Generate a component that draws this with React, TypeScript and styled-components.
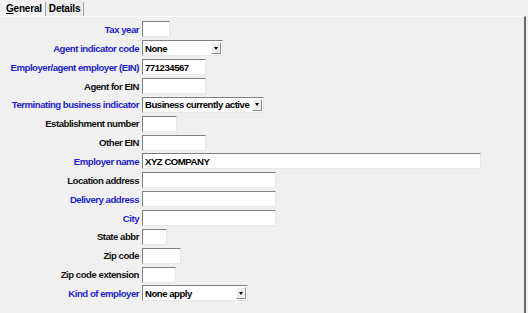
import styled, { createGlobalStyle } from 'styled-components';

const GlobalStyle = createGlobalStyle`
  html, body {
    margin: 0;
    padding: 0;
    background: #f0f0f0;
  }
`;

const Window = styled.div`
  width: 528px;
  height: 313px;
  display: flex;
  flex-direction: column;
  background: #f0f0f0;
  font-family: 'Liberation Sans', Arial, sans-serif;
  font-size: 9.6px;
  letter-spacing: -0.48px;
  font-weight: bold;
  overflow: hidden;
`;

const TabStrip = styled.div`
  display: flex;
  align-items: flex-end;
  height: 16px;
  padding-left: 3px;
`;

const Tab = styled.div<{ $active?: boolean }>`
  padding: 0 3px 0 3px;
  height: 14px;
  line-height: 14px;
  font-size: 10px;
  letter-spacing: -0.2px;
  color: #000;
  border-right: 1px solid #a0a0a0;
  background: ${(p) => (p.$active ? '#f4f4f4' : '#ececec')};

  u {
    text-decoration: underline;
  }
`;

const Panel = styled.div`
  flex: 1;
  border-top: 1px solid #fafafa;
  border-right: 2px solid #6a6a6a;
  margin-right: 2px;
  padding-top: 3px;
`;

const Form = styled.div`
  display: grid;
  grid-template-columns: 139px 1fr;
  grid-auto-rows: 18.86px;
  column-gap: 3px;
  align-items: center;
`;

const Label = styled.div<{ $blue?: boolean }>`
  text-align: right;
  white-space: nowrap;
  color: ${(p) => (p.$blue ? '#1e1ecc' : '#111')};
`;

const Field = styled.div<{ $w: number }>`
  width: ${(p) => p.$w}px;
  height: 16px;
  box-sizing: border-box;
  background: #fff;
  border-top: 1px solid #808080;
  border-left: 1px solid #808080;
  border-right: 1px solid #e8e8e8;
  border-bottom: 1px solid #e8e8e8;
  display: flex;
  align-items: center;
  padding-left: 2px;
  color: #000;
  white-space: nowrap;
`;

const FieldText = styled.span`
  flex: 1;
`;

const DropButton = styled.div`
  width: 10px;
  height: 12px;
  margin-right: 1px;
  background: #ececec;
  border-left: 1px solid #fff;
  border-top: 1px solid #fff;
  border-right: 1px solid #909090;
  border-bottom: 1px solid #909090;
  box-sizing: border-box;
  display: flex;
  align-items: center;
  justify-content: center;

  &::after {
    content: '';
    border-left: 2.5px solid transparent;
    border-right: 2.5px solid transparent;
    border-top: 3px solid #000;
  }
`;

type Row = {
  label: string;
  blue?: boolean;
  w: number;
  value?: string;
  select?: boolean;
};

const rows: Row[] = [
  { label: 'Tax year', blue: true, w: 28 },
  { label: 'Agent indicator code', blue: true, w: 81, value: 'None', select: true },
  { label: 'Employer/agent employer (EIN)', blue: true, w: 64, value: '771234567' },
  { label: 'Agent for EIN', w: 64 },
  { label: 'Terminating business indicator', blue: true, w: 122, value: 'Business currently active', select: true },
  { label: 'Establishment number', w: 35 },
  { label: 'Other EIN', w: 64 },
  { label: 'Employer name', blue: true, w: 339, value: 'XYZ COMPANY' },
  { label: 'Location address', w: 134 },
  { label: 'Delivery address', blue: true, w: 134 },
  { label: 'City', blue: true, w: 134 },
  { label: 'State abbr', w: 25 },
  { label: 'Zip code', w: 39 },
  { label: 'Zip code extension', w: 34 },
  { label: 'Kind of employer', blue: true, w: 106, value: 'None apply', select: true },
];

export default function App() {
  return (
    <>
      <GlobalStyle />
      <Window>
        <TabStrip>
          <Tab $active>
            <u>G</u>eneral
          </Tab>
          <Tab>Details</Tab>
        </TabStrip>
        <Panel>
          <Form>
            {rows.map((r) => (
              <>
                <Label key={r.label} $blue={r.blue}>
                  {r.label}
                </Label>
                <div>
                  <Field $w={r.w}>
                    <FieldText>{r.value}</FieldText>
                    {r.select && <DropButton />}
                  </Field>
                </div>
              </>
            ))}
          </Form>
        </Panel>
      </Window>
    </>
  );
}
